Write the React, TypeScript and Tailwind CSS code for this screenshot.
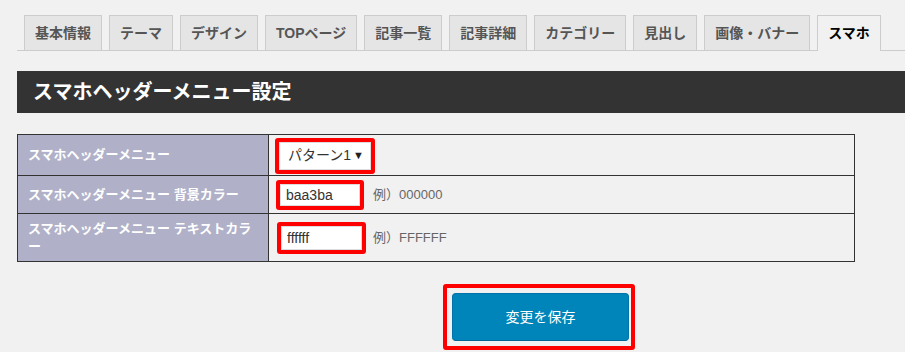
const tabs = ['基本情報', 'テーマ', 'デザイン', 'TOPページ', '記事一覧', '記事詳細', 'カテゴリー', '見出し', '画像・バナー', 'スマホ']

const Tabs = () => (
  <div className="flex items-end border-b border-[#ccc] pl-[7px]">
    {tabs.map((t, i) => {
      const active = i === tabs.length - 1
      return (
        <div
          key={t}
          className={
            active
              ? 'mr-[7px] -mb-px border border-b-0 border-[#ccc] bg-[#f1f1f1] px-[10px] pt-[5px] pb-[6px] text-[14px] leading-6 font-semibold text-black'
              : 'mr-[7px] border border-b-0 border-[#ccc] bg-[#e5e5e5] px-[10px] py-[5px] text-[14px] leading-6 font-semibold text-[#555]'
          }
        >
          {t}
        </div>
      )
    })}
  </div>
)

const Mark = ({ className, children }: { className: string; children: React.ReactNode }) => (
  <div className={`inline-flex rounded-[3px] border-4 border-[#ff0000] ${className}`}>{children}</div>
)

export default function App() {
  return (
    <div className="min-h-screen bg-[#f1f1f1] pt-[15px] pl-[17px] [font-family:'Liberation_Sans','Noto_Sans_CJK_JP',sans-serif]">
      <Tabs />

      <div className="mt-5 flex h-[42px] items-center bg-[#333] px-4 text-[20px] font-bold text-white">
        スマホヘッダーメニュー設定
      </div>

      <table className="mt-[21px] w-[838px] border-collapse border border-[#333]">
        <tbody>
          <tr className="h-[41px]">
            <th className="w-[251px] border border-[#333] bg-[#b0b1c8] px-[10px] text-left text-[13px] leading-[18px] font-bold text-white">
              スマホヘッダーメニュー
            </th>
            <td className="border border-[#333] pl-[6px] align-middle">
              <Mark className="mt-px">
                <div className="flex h-[28px] w-[92px] shrink-0 items-center border border-[#ddd] bg-white pr-[6px] pl-[8px] text-[14px] text-[#333]">
                  <span>パターン1</span>
                  <span className="ml-auto text-[11px] leading-none text-[#222]">▼</span>
                </div>
              </Mark>
            </td>
          </tr>
          <tr className="h-[38px]">
            <th className="border border-[#333] bg-[#b0b1c8] px-[10px] text-left text-[13px] leading-[18px] font-bold text-white">
              スマホヘッダーメニュー 背景カラー
            </th>
            <td className="border border-[#333] pl-[7px] align-middle">
              <div className="flex items-center gap-[9px]">
                <Mark className="">
                  <input
                    readOnly
                    value="baa3ba"
                    className="h-[22px] w-[80px] border border-[#ddd] bg-white pl-[5px] text-[14px] text-[#333] outline-none"
                  />
                </Mark>
                <span className="text-[13px] text-[#666]">例）000000</span>
              </div>
            </td>
          </tr>
          <tr className="h-[48px]">
            <th className="border border-[#333] bg-[#b0b1c8] px-[10px] text-left text-[13px] leading-[18px] font-bold text-white">
              スマホヘッダーメニュー テキストカラー
            </th>
            <td className="border border-[#333] pl-[8px] align-middle">
              <div className="flex items-center gap-[7px]">
                <Mark className="">
                  <input
                    readOnly
                    value="ffffff"
                    className="h-[24px] w-[81px] border border-[#ddd] bg-white pl-[5px] text-[14px] text-[#333] outline-none"
                  />
                </Mark>
                <span className="text-[13px] text-[#666]">例）FFFFFF</span>
              </div>
            </td>
          </tr>
        </tbody>
      </table>

      <div className="mt-[22px] pl-[426px]">
        <Mark className="p-[5px] pr-[2px]">
          <button className="h-[48px] w-[177px] rounded-[4px] border border-[#0073aa] border-b-[#006799] bg-[#0085ba] text-[14px] text-white">
            変更を保存
          </button>
        </Mark>
      </div>
    </div>
  )
}
